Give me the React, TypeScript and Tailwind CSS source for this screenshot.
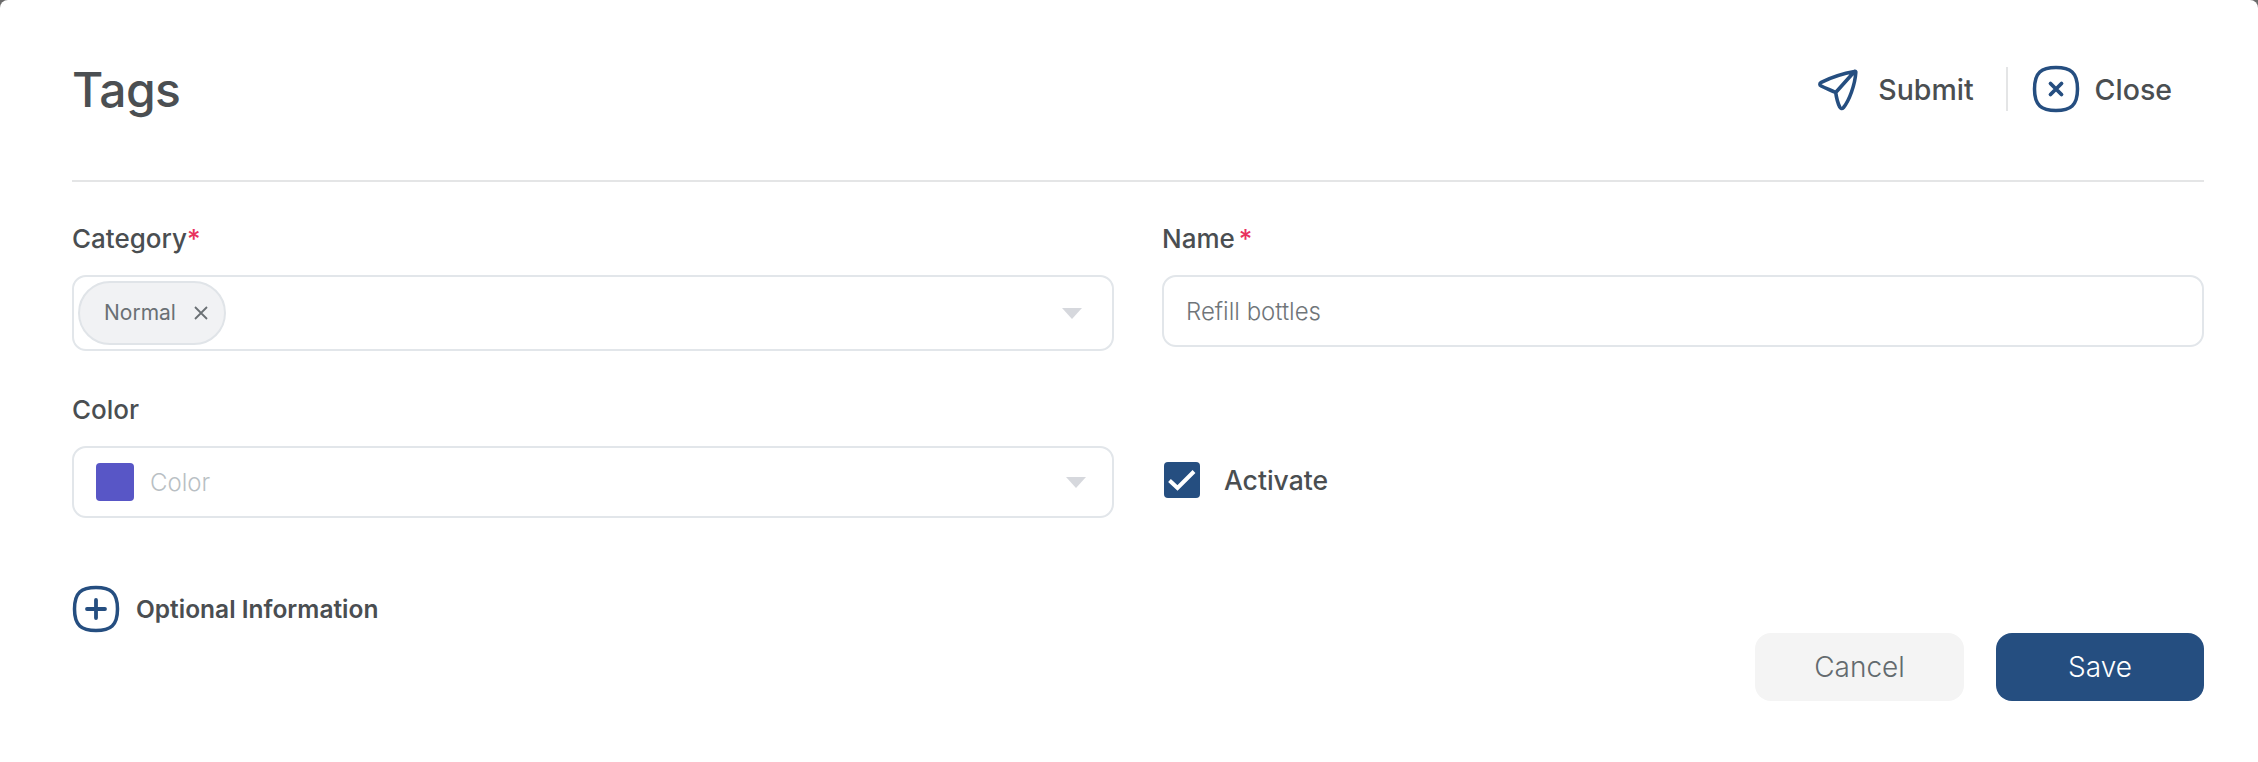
import React from "react";

const font = { fontFamily: "Inter, 'Noto Sans', sans-serif" };

const Caret = () => (
  <svg width="20" height="11" viewBox="0 0 20 11" className="shrink-0">
    <path d="M0 0h20L10 11z" fill="#d6d8dd" />
  </svg>
);

const SquircleIcon = ({ kind }: { kind: "x" | "plus" }) => (
  <svg width="48" height="48" viewBox="0 0 48 48" fill="none" stroke="#254e80" strokeLinecap="round" className="shrink-0">
    <path d="M24 2.500c-14.500 0-21.500 5-21.500 21.500S9.500 45.500 24 45.500 45.500 40.500 45.500 24 38.500 2.500 24 2.500z" strokeWidth="3.500" />
    {kind === "x" ? (
      <path d="M18.500 18.500l11 11m0-11l-11 11" strokeWidth="3.800" />
    ) : (
      <path d="M15 24h18M24 15v18" strokeWidth="3.800" />
    )}
  </svg>
);

const SendIcon = () => (
  <svg width="42" height="44" viewBox="0 0 42 44" fill="none" stroke="#254e80" strokeWidth="3.600" strokeLinejoin="round" strokeLinecap="round" className="shrink-0">
    <path d="M38.500 4.500c.8-.6 1.500 0 1.300 1C39 18 33 34 27.500 40.500c-1.500 1.600-3 1-3.800-.5-2-4-3.200-9-4-14.500-5-2.500-10-4-14.500-6.500-1.800-1-1.800-2.700 0-3.700C14 11 27 6.500 38.500 4.500zM19.700 25.500L38.500 4.500" />
  </svg>
);

const Label = ({ text, gap }: { text: string; gap?: boolean }) => (
  <div className="h-[37px] text-[26px] leading-[35px] font-medium text-[#4a4e51]">
    {text}
    <span className={gap ? "ml-1 text-[#e8325d]" : "text-[#e8325d]"}>*</span>
  </div>
);

export default function App() {
  return (
    <div className="relative h-[762px] w-[2258px] overflow-hidden bg-[#6b6b6b]" style={font}>
      <div className="flex h-full flex-col rounded-t-[8px] bg-white px-[54px]">
        <div className="ml-[18px] flex h-[182px] items-center justify-between border-b-2 border-[#e4e5e6] pb-[2px]">
          <h1 className="mt-[2px] text-[48px] leading-none font-[450] tracking-[-0.6px] text-[#4b4f52]">Tags</h1>
          <div className="mr-[32px] flex items-center">
            <SendIcon />
            <span className="mt-[2px] ml-[20px] text-[28.500px] font-medium text-[#4a4e51]">Submit</span>
            <div className="mr-[24px] ml-[32px] h-[44px] w-[2px] bg-[#e4e5e6]" />
            <SquircleIcon kind="x" />
            <span className="mt-[2px] ml-[15px] text-[28.500px] font-medium text-[#4a4e51]">Close</span>
          </div>
        </div>

        <div className="ml-[18px] grid grid-cols-2 gap-x-[48px] pt-[39px]">
          <div>
            <Label text="Category" />
            <div className="mt-[17px] flex h-[76px] items-center justify-between rounded-[14px] border-2 border-[#e2e6ea] pr-[30px] pl-[4px]">
              <div className="flex h-[64px] items-center rounded-full border-2 border-[#e0e4e8] bg-[#f1f2f4] pr-[15px] pl-[24px]">
                <span className="text-[21px] text-[#6a7074]">Normal</span>
                <svg width="16" height="16" viewBox="0 0 16 16" className="ml-[17px]" stroke="#6a7074" strokeWidth="1.800">
                  <path d="M2 2l12 12M14 2L2 14" />
                </svg>
              </div>
              <Caret />
            </div>
          </div>
          <div>
            <Label text="Name" gap />
            <div className="mt-[17px] flex h-[72px] items-center rounded-[14px] border-2 border-[#e2e6ea] pt-[1px] pl-[22px] text-[24px] font-light text-[#6f7579]">
              Refill bottles
            </div>
          </div>
          <div className="pt-[41px]">
            <div className="h-[37px] text-[26px] leading-[35px] font-medium text-[#4a4e51]">Color</div>
            <div className="mt-[17px] flex h-[72px] items-center rounded-[14px] border-2 border-[#e2e6ea] pr-[26px] pl-[22px]">
              <div className="h-[38px] w-[38px] rounded-[4px] bg-[#5856c6]" />
              <span className="mt-[1px] ml-[16px] flex-1 text-[24px] font-light text-[#b9bfc4]">Color</span>
              <Caret />
            </div>
          </div>
          <div className="flex items-end pb-[20px] pl-[2px]">
            <div className="flex h-[36px] w-[36px] items-center justify-center rounded-[4px] bg-[#254e80]">
              <svg width="28" height="22" viewBox="0 0 28 22" fill="none" stroke="#fff" strokeWidth="4">
                <path d="M1.500 11.500l8 7.500L26 2.500" />
              </svg>
            </div>
            <span className="ml-[24px] h-[36px] text-[26.500px] leading-[36px] font-medium text-[#4a4e51]">Activate</span>
          </div>
        </div>

        <div className="mt-[67px] ml-[18px] flex items-center">
          <SquircleIcon kind="plus" />
          <span className="ml-[16px] text-[24.500px] font-semibold text-[#4a4e51]">Optional Information</span>
        </div>

        <div className="ml-[18px] flex justify-end gap-[32px]">
          <button className="h-[68px] w-[209px] rounded-[16px] bg-[#f4f4f4] text-[28px] font-light text-[#636a6e]">Cancel</button>
          <button className="h-[68px] w-[208px] rounded-[16px] bg-[#254e80] text-[28px] font-light text-white">Save</button>
        </div>
      </div>
    </div>
  );
}
